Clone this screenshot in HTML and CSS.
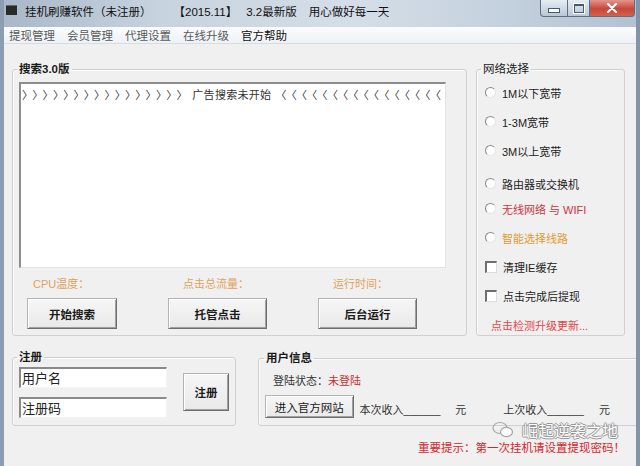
FILE: index.html
```html
<!DOCTYPE html>
<html lang="zh-CN">
<head>
    <meta charset="UTF-8">
    <meta name="viewport" content="width=device-width, initial-scale=1.0">
    <title>挂机刷赚软件</title>
    <link rel="stylesheet" href="styles.css">
</head>
<body>
    <div class="window">
        <div class="titlebar">
            <span class="app-icon"></span>
            <span class="title-part name">挂机刷赚软件（未注册）</span>
            <span class="title-part date">【2015.11】</span>
            <span class="title-part ver">3.2最新版</span>
            <span class="title-part motto">用心做好每一天</span>
            <div class="caption-btns">
                <span class="cbtn min"><i></i></span>
                <span class="cbtn max"><i></i></span>
                <span class="cbtn close">
                    <svg width="12" height="10" viewBox="0 0 12 10">
                        <path d="M2 1 L10 9 M10 1 L2 9" stroke="#fff" stroke-width="2.2" stroke-linecap="round"/>
                    </svg>
                </span>
            </div>
        </div>

        <div class="menubar">
            <span class="menu-item">提现管理</span>
            <span class="menu-item">会员管理</span>
            <span class="menu-item">代理设置</span>
            <span class="menu-item">在线升级</span>
            <span class="menu-item active">官方帮助</span>
        </div>

        <div class="client">
            <div class="top-row">
                <fieldset class="group search">
                    <legend class="bold">搜索3.0版</legend>
                    <div class="output">〉〉〉〉〉〉〉〉〉〉〉〉〉〉〉〉<span class="msg">广告搜索未开始</span>〈〈〈〈〈〈〈〈〈〈〈〈〈〈〈〈</div>
                    <div class="controls">
                        <div class="ctl c1">
                            <span class="stat">CPU温度：</span>
                            <button class="btn">开始搜索</button>
                        </div>
                        <div class="ctl c2">
                            <span class="stat">点击总流量：</span>
                            <button class="btn">托管点击</button>
                        </div>
                        <div class="ctl c3">
                            <span class="stat">运行时间：</span>
                            <button class="btn">后台运行</button>
                        </div>
                    </div>
                </fieldset>

                <fieldset class="group net">
                    <legend>网络选择</legend>
                    <div class="options">
                        <label class="opt"><span class="radio"></span>1M以下宽带</label>
                        <label class="opt"><span class="radio"></span>1-3M宽带</label>
                        <label class="opt"><span class="radio"></span>3M以上宽带</label>
                        <label class="opt push"><span class="radio"></span>路由器或交换机</label>
                        <label class="opt pull red"><span class="radio"></span>无线网络 与 WIFI</label>
                        <label class="opt orange"><span class="radio"></span>智能选择线路</label>
                        <label class="opt"><span class="check"></span>清理IE缓存</label>
                        <label class="opt"><span class="check"></span>点击完成后提现</label>
                        <span class="opt link">点击检测升级更新...</span>
                    </div>
                </fieldset>
            </div>

            <div class="bottom-row">
                <fieldset class="group reg">
                    <legend class="bold">注册</legend>
                    <div class="reg-body">
                        <div class="fields">
                            <div class="input">用户名</div>
                            <div class="input">注册码</div>
                        </div>
                        <button class="btn reg-btn">注册</button>
                    </div>
                </fieldset>

                <fieldset class="group info">
                    <legend class="bold">用户信息</legend>
                    <div class="status">登陆状态：<span class="red-text">未登陆</span></div>
                    <div class="income">
                        <button class="btn site-btn">进入官方网站</button>
                        <span class="amount">本次收入______</span>
                        <span class="unit">元</span>
                        <span class="amount">上次收入______</span>
                        <span class="unit">元</span>
                    </div>
                </fieldset>
            </div>

            <p class="notice">重要提示：第一次挂机请设置提现密码！</p>

            <div class="watermark">
                <svg width="22" height="18" viewBox="0 0 22 18">
                    <ellipse cx="8" cy="7" rx="7" ry="5.5" fill="none" stroke="#9a9a9a" stroke-width="1.2"/>
                    <ellipse cx="14.5" cy="11" rx="6" ry="4.6" fill="#fff" stroke="#9a9a9a" stroke-width="1.2"/>
                </svg>
                <span>崛起逆袭之地</span>
            </div>
        </div>
    </div>
</body>
</html>
```

FILE: styles.css
```css
body {
    margin: 0;
    width: 640px;
    height: 466px;
    overflow: hidden;
    font-family: "Liberation Sans", "Noto Sans CJK SC", sans-serif;
    font-size: 11px;
    color: #1a1a1a;
    background: #f0f0f0;
}

.window {
    height: 466px;
    display: flex;
    flex-direction: column;
    border-left: 4px solid #8c9db1;
    border-right: 4px solid #8194aa;
    box-sizing: border-box;
}

/* title bar */

.titlebar {
    height: 27px;
    display: flex;
    align-items: flex-start;
    padding-top: 3px;
    box-sizing: border-box;
    background: linear-gradient(to right, #a9b8c8 0%, #c7d3df 25%, #d5dee8 55%, #c3d0dd 80%, #b2c2d3 100%);
    position: relative;
    font-size: 11.5px;
}

.app-icon {
    width: 11px;
    height: 9px;
    margin: 2px 8px 0 2px;
    background: #2a2a2a;
    border-top: 1px solid #666;
}

.title-part {
    white-space: nowrap;
    color: #111;
}

.title-part.date { margin-left: 22px; }
.title-part.ver { margin-left: 9px; }
.title-part.motto { margin-left: 12px; }

.caption-btns {
    position: absolute;
    top: 0;
    right: 1px;
    display: flex;
}

.cbtn {
    height: 17px;
    display: flex;
    align-items: center;
    justify-content: center;
    border: 1px solid #5f6f82;
    border-top: none;
    box-sizing: border-box;
    background: linear-gradient(#e6edf4, #b8c7d6);
}

.cbtn.min {
    width: 28px;
    border-radius: 0 0 0 4px;
}

.cbtn.max {
    width: 22px;
    border-left: none;
}

.cbtn.close {
    width: 45px;
    border-left: none;
    border-radius: 0 0 4px 0;
    background: linear-gradient(#e3958c, #c8463a 55%, #d1634f);
}

.cbtn.min i {
    width: 10px;
    height: 3px;
    margin-top: 5px;
    background: #fff;
    border: 1px solid #4b5a6b;
}

.cbtn.max i {
    width: 8px;
    height: 6px;
    border: 1px solid #4b5a6b;
    border-top-width: 2px;
    background: transparent;
    box-shadow: 0 0 0 1px #fff;
}

/* menu */

.menubar {
    height: 16px;
    display: flex;
    align-items: center;
    gap: 12px;
    padding-left: 5px;
    background: linear-gradient(#fbfcfd, #eef2f6);
    border-bottom: 1px solid #d6dce3;
    font-size: 11.5px;
}

.menu-item { color: #5a5a5a; }
.menu-item.active { color: #111; }

/* client area */

.client {
    flex: 1;
    padding: 17px 0 0 8px;
    position: relative;
    overflow: hidden;
}

.group {
    margin: 0;
    border: 1px solid #d0d0d0;
    border-radius: 3px;
    box-shadow: inset 1px 1px #fafafa;
    min-width: 0;
}

.group legend {
    padding: 0 2px;
    line-height: 16px;
    font-size: 11.5px;
}

.group legend.bold {
    font-weight: bold;
}

.top-row {
    display: flex;
    gap: 9px;
    height: 275px;
}

.search {
    width: 455px;
    box-sizing: border-box;
    padding: 5px 20px 6px 6px;
    display: flex;
    flex-direction: column;
}

.search legend {
    margin-left: -2px;
}

.output {
    height: 186px;
    box-sizing: border-box;
    background: #fff;
    border: 1px solid #e3e3e3;
    border-top: 2px solid #8d8d8d;
    border-left: 2px solid #8d8d8d;
    padding: 2px 0 0 1px;
    font-family: "Noto Sans CJK SC", sans-serif;
    font-size: 11px;
    letter-spacing: 4.8px;
    white-space: nowrap;
    overflow: hidden;
    color: #333;
}

.output .msg {
    letter-spacing: 0.3px;
    margin: 0 4px 0 0;
}

.controls {
    display: grid;
    grid-template-columns: 141px 150px 1fr;
    padding-left: 8px;
    margin-top: 9px;
}

.ctl {
    display: flex;
    flex-direction: column;
    align-items: flex-start;
    gap: 7px;
}

.stat {
    color: #e0a25c;
    line-height: 14px;
}

.c1 .stat { margin-left: 6px; }
.c2 .stat, .c3 .stat { margin-left: 15px; }

.btn {
    font-family: "Liberation Sans", "Noto Sans CJK SC", sans-serif;
    font-size: 11.5px;
    font-weight: bold;
    color: #1a1a1a;
    height: 31px;
    width: 99px;
    padding: 0;
    background: linear-gradient(#f6f6f6, #e9e9e9);
    border: 1px solid #b4b4b4;
    border-right-color: #6e6e6e;
    border-bottom-color: #6e6e6e;
    box-shadow: inset 1px 1px #fff, inset -1px -1px #a0a0a0;
}

.c1 .btn { width: 90px; }

/* network options */

.net {
    width: 149px;
    box-sizing: border-box;
    padding: 0 6px 0 7px;
}

.net legend {
    margin-left: -3px;
}

.options {
    display: flex;
    flex-direction: column;
    padding-top: 1px;
}

.opt {
    height: 29px;
    display: flex;
    align-items: center;
    white-space: nowrap;
    color: #222;
}

.opt.push { margin-top: 4px; }
.opt.pull { margin-top: -4px; }
.opt.red { color: #c9353f; }
.opt.orange { color: #e19a36; }

.opt.link {
    color: #e2454a;
    padding-left: 7px;
}

.radio {
    width: 9px;
    height: 9px;
    border-radius: 50%;
    border: 1px solid;
    border-color: #8a8a8a #e6e6e6 #e6e6e6 #8a8a8a;
    background: #fdfdfd;
    margin: 0 6px 0 1px;
}

.check {
    width: 9px;
    height: 9px;
    border: 1px solid;
    border-width: 2px 1px 1px 2px;
    border-color: #6f6f6f #dcdcdc #dcdcdc #6f6f6f;
    background: #fff;
    margin: 0 6px 0 1px;
}

/* bottom section */

.bottom-row {
    display: flex;
    gap: 22px;
    margin-top: 14px;
    height: 76px;
}

.reg {
    width: 224px;
    box-sizing: border-box;
    padding: 0 5px 6px 6px;
}

.reg legend {
    margin-left: -2px;
    line-height: 15px;
}

.reg-body {
    display: flex;
    align-items: center;
    gap: 16px;
}

.fields {
    display: flex;
    flex-direction: column;
    gap: 9px;
    padding-top: 2px;
}

.input {
    width: 148px;
    height: 21px;
    box-sizing: border-box;
    background: #fff;
    border: 1px solid #f3f3f3;
    border-top: 2px solid #8a8a8a;
    border-left: 2px solid #8a8a8a;
    font-family: "Noto Sans CJK SC", sans-serif;
    font-size: 13px;
    line-height: 18px;
    padding-left: 1px;
    color: #222;
}

.reg-btn {
    width: 46px;
    height: 38px;
}

.info {
    flex: 1;
    margin-right: -12px;
    padding: 0 0 0 6px;
}

.info legend {
    margin-left: -1px;
}

.status {
    margin: 7px 0 0 8px;
    line-height: 16px;
    color: #333;
}

.red-text { color: #c23234; }

.income {
    display: flex;
    align-items: flex-end;
    margin-top: 6px;
    color: #333;
    white-space: nowrap;
}

.site-btn {
    width: 91px;
    height: 23px;
    font-weight: normal;
    margin-right: 6px;
}

.income .amount,
.income .unit {
    line-height: 14px;
    margin-bottom: 1px;
}

.income .unit {
    margin-left: 15px;
    margin-right: 37px;
}

.notice {
    margin: 13px 0 0 406px;
    font-size: 11.5px;
    color: #d6262b;
    white-space: nowrap;
}

.watermark {
    position: absolute;
    left: 488px;
    top: 376px;
    display: flex;
    align-items: center;
    gap: 8px;
    font-family: "Noto Sans CJK SC", sans-serif;
    font-size: 16px;
    line-height: 20px;
    color: #fff;
    text-shadow: -1px 0 #8a8a8a, 1px 0 #8a8a8a, 0 -1px #8a8a8a, 0 1px #8a8a8a;
    opacity: 0.85;
}
```
